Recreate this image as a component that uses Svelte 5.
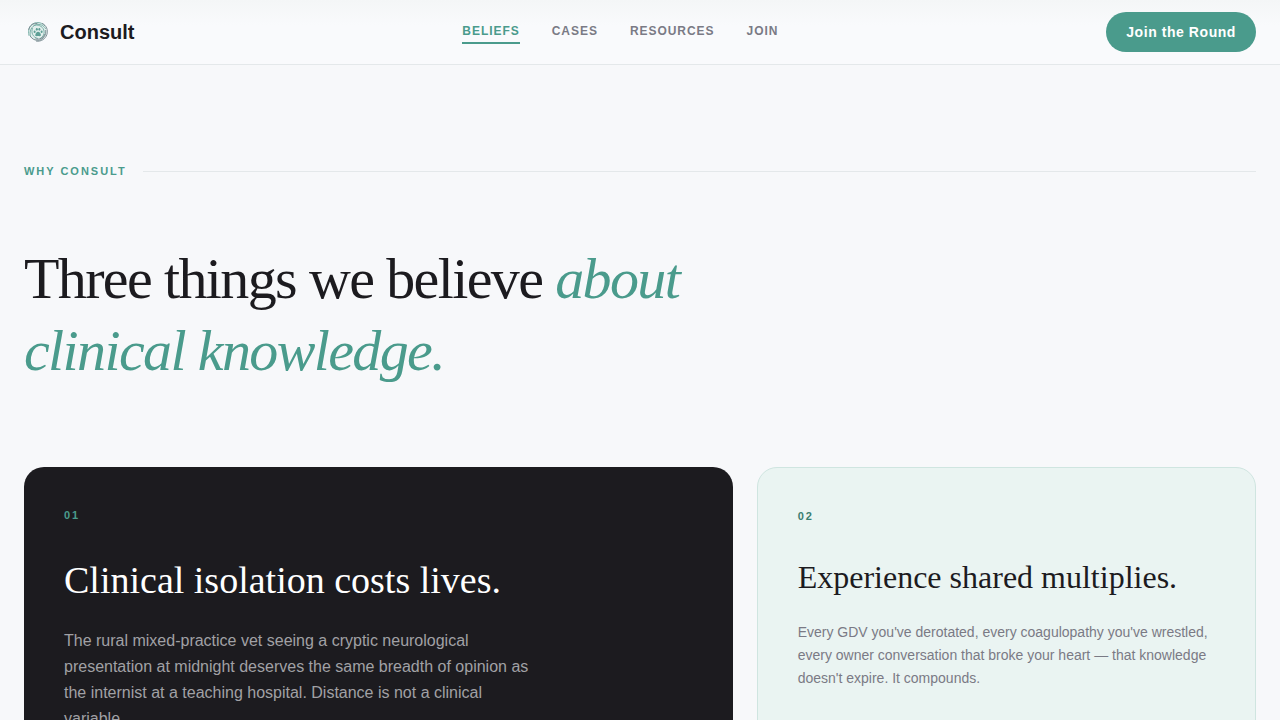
<script lang="ts">
  const links = [
    { href: '#beliefs', label: 'Beliefs' },
    { href: '#cases', label: 'Cases' },
    { href: '#resources', label: 'Resources' },
    { href: '#join', label: 'Join' },
  ]

  let active = $state('#beliefs')
</script>

<header class="site-header">
  <a href="#top" class="brand">
    <svg class="brand-mark" viewBox="0 0 28 28" aria-hidden="true">
      <circle cx="14" cy="14" r="9" fill="#e3efed" />
      <g fill="none" stroke-linecap="round" stroke-width="0.9">
        <!-- loose rings, drawn as broken arcs -->
        <g stroke="#6fa9a0">
          <path d="M5 17.500C3.200 11.500 6.500 5.200 12.500 4.600C16 4.200 19 5.500 21 8" />
          <path d="M6.500 18.500C4.900 13.500 7.500 8 12.300 6.600C16 5.700 19.500 7.300 21.500 10.500" />
          <path d="M10 7.500C13.500 6 18.500 8 19.800 12C20.800 15.500 19.300 18.800 16.500 20.300" />
          <path d="M8.500 10.500C6.700 14.500 8.800 19.300 13.500 20.400" />
        </g>
        <g stroke="#74868c">
          <path d="M18.500 5.500C22.500 7.500 24.300 12 22.900 16.500C21.500 21 17 23.800 12.500 23.200" />
          <path d="M21.700 12.500C22.300 17 19.500 21.300 15 22.200C11 22.700 8 21 6.500 18.500" />
          <path d="M4.700 11.500C5.500 7.500 9 5 13 5.500" />
          <path d="M20.700 16.500C19.500 20 15.500 21.800 11.800 20.900" />
        </g>
      </g>
      <g fill="#5d9f95">
        <ellipse cx="10.600" cy="13.700" rx="1" ry="1.300" />
        <ellipse cx="12.800" cy="11.300" rx="1" ry="1.400" />
        <ellipse cx="15.400" cy="11.300" rx="1" ry="1.400" />
        <ellipse cx="17.600" cy="13.700" rx="1" ry="1.300" />
        <path d="M14.100 13.800C12.500 13.800 11.300 15.900 11.300 17.100C11.300 18.600 12.900 18.300 14.100 18.100C15.300 18.300 16.900 18.600 16.900 17.100C16.900 15.900 15.700 13.800 14.100 13.800Z" />
      </g>
    </svg>
    <span>Consult</span>
  </a>

  <nav class="nav" aria-label="Main">
    {#each links as link}
      <a
        href={link.href}
        class="nav-link"
        class:active={active === link.href}
        onclick={() => (active = link.href)}
      >{link.label}</a>
    {/each}
  </nav>

  <button class="cta" type="button">Join the Round</button>
</header>

<main class="beliefs" id="beliefs">
  <p class="eyebrow">Why Consult</p>

  <h1 class="title">Three things we believe <em>about clinical knowledge.</em></h1>

  <div class="cards">
    <article class="card dark">
      <p class="number">01</p>
      <h2>Clinical isolation costs lives.</h2>
      <p class="copy">
        The rural mixed-practice vet seeing a cryptic neurological presentation at midnight
        deserves the same breadth of opinion as the internist at a teaching hospital. Distance
        is not a clinical variable.
      </p>
    </article>

    <article class="card mint">
      <p class="number">02</p>
      <h2>Experience shared multiplies.</h2>
      <p class="copy">
        Every GDV you've derotated, every coagulopathy you've wrestled, every owner
        conversation that broke your heart — that knowledge doesn't expire. It compounds.
      </p>
    </article>
  </div>
</main>

<style>
  :global(body) {
    margin: 0;
    background: #f7f8fa;
    color: #1c1b1f;
    font-family: 'Liberation Sans', Arial, sans-serif;
  }

  p,
  h1,
  h2 {
    margin: 0;
  }

  /* --- Header --- */

  .site-header {
    position: sticky;
    top: 0;
    z-index: 10;
    display: flex;
    align-items: center;
    justify-content: space-between;
    padding: 12px 24px;
    background: linear-gradient(#f4f6f7, #f9fafc 40%);
    border-bottom: 1px solid #e4e8ea;
  }

  .brand {
    display: flex;
    align-items: center;
    gap: 8px;
    color: #1c1b1f;
    font-size: 20px;
    font-weight: 700;
    text-decoration: none;
  }

  .brand-mark {
    width: 28px;
    height: 28px;
  }

  .nav {
    display: flex;
    gap: 32px;
  }

  .nav-link {
    padding: 2px 0;
    border-bottom: 2px solid transparent;
    color: #7a7a85;
    font-size: 12px;
    font-weight: 700;
    line-height: 18px;
    letter-spacing: 0.08em;
    text-transform: uppercase;
    text-decoration: none;
  }

  .nav-link.active {
    color: #4a9b8c;
    border-bottom-color: #4a9b8c;
  }

  .cta {
    height: 40px;
    padding: 0 20px;
    border: none;
    border-radius: 20px;
    background: #4a9b8c;
    color: #fff;
    font-family: inherit;
    font-size: 14px;
    font-weight: 700;
    letter-spacing: 0.04em;
    cursor: pointer;
  }

  /* --- Beliefs --- */

  .beliefs {
    padding: 96px 24px;
  }

  .eyebrow {
    display: flex;
    align-items: center;
    gap: 16px;
    margin-bottom: 62px;
    color: #4a9b8c;
    font-size: 11px;
    font-weight: 700;
    line-height: 20px;
    letter-spacing: 0.18em;
    text-transform: uppercase;
  }

  .eyebrow::after {
    content: '';
    flex: 1;
    height: 1px;
    background: #e4e8ea;
  }

  .title {
    max-width: 720px;
    margin-bottom: 80px;
    font-family: 'Liberation Serif', 'Times New Roman', serif;
    font-size: 58px;
    font-weight: 400;
    line-height: 72px;
    letter-spacing: -0.028em;
  }

  .title em {
    color: #4a9b8c;
  }

  .cards {
    display: grid;
    grid-template-columns: repeat(12, 1fr);
    gap: 24px;
  }

  .card {
    padding: 40px;
    border-radius: 20px;
  }

  .card h2 {
    margin-bottom: 24px;
    font-family: 'Liberation Serif', 'Times New Roman', serif;
    font-weight: 400;
  }

  .number {
    margin-bottom: 33px;
    font-size: 11px;
    font-weight: 700;
    line-height: 16px;
    letter-spacing: 0.18em;
  }

  .dark {
    grid-column: span 7;
    background: #1c1b1f;
  }

  .dark .number {
    color: #4a9b8c;
  }

  .dark h2 {
    color: #fff;
    font-size: 38px;
    line-height: 48px;
  }

  .dark .copy {
    max-width: 480px;
    color: #a1a1a5;
    font-size: 16px;
    line-height: 26px;
  }

  .mint {
    grid-column: span 5;
    background: #eaf4f2;
    border: 1px solid #cfe5e0;
  }

  .mint .number {
    color: #3a7d70;
  }

  .mint h2 {
    font-size: 32px;
    line-height: 40px;
  }

  .mint .copy {
    color: #7a7a85;
    font-size: 14px;
    line-height: 23px;
  }
</style>
